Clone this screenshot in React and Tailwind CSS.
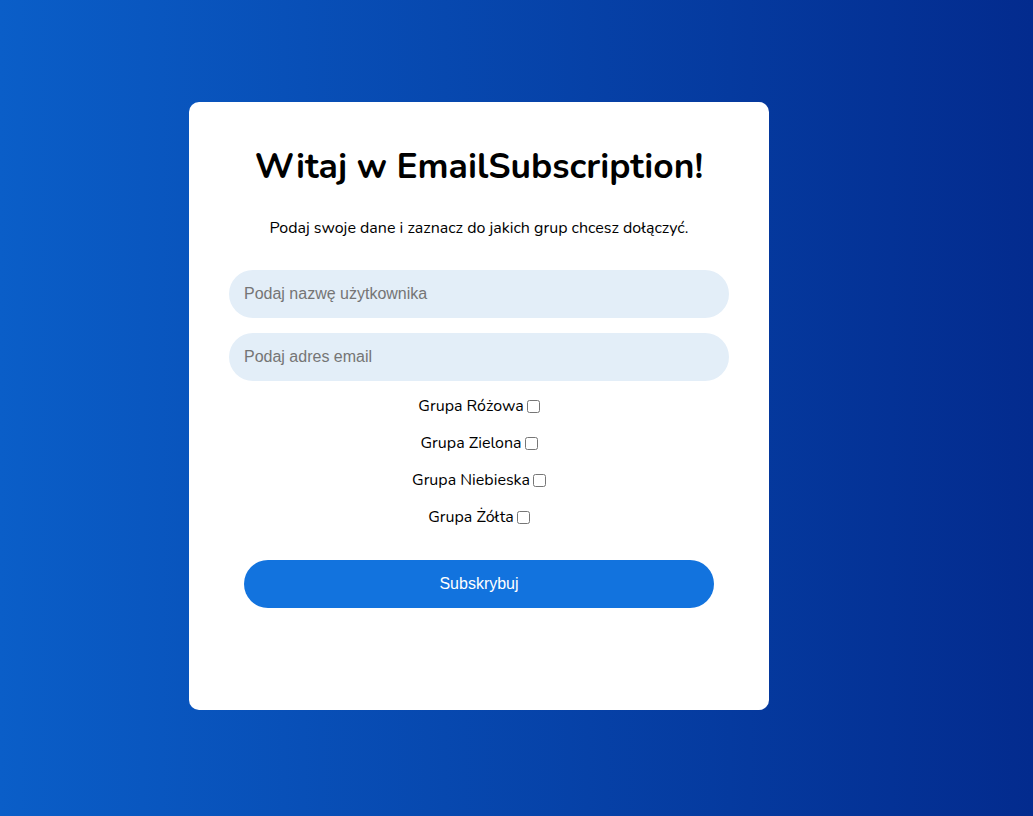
import React from "react";

export default function App() {
  const groups = ["Grupa Różowa", "Grupa Zielona", "Grupa Niebieska", "Grupa Żółta"];
  return (
    <div className="min-h-[816px] w-full bg-[linear-gradient(to_right,#0a5ec8,#032b8e)] pt-[102px] pl-[189px]">
      <div className="w-[580px] h-[608px] bg-white rounded-[10px] px-[40px] pt-[40px] flex flex-col items-center" style={{ fontFamily: "Nunito, 'Noto Sans', sans-serif" }}>
        <h1 className="text-[35.4px] leading-[48px] font-bold text-black text-center">Witaj w EmailSubscription!</h1>
        <p className="mt-[26px] text-[16px] leading-[24px] text-black text-center">Podaj swoje dane i zaznacz do jakich grup chcesz dołączyć.</p>
        <input
          type="text"
          placeholder="Podaj nazwę użytkownika"
          className="mt-[30px] w-[500px] h-[48px] rounded-full bg-[#e3eef8] px-[15px] text-[16px] outline-none placeholder:text-[#757575]"
          style={{ fontFamily: "'Liberation Sans', Arial, sans-serif" }}
        />
        <input
          type="email"
          placeholder="Podaj adres email"
          className="mt-[15px] w-[500px] h-[48px] rounded-full bg-[#e3eef8] px-[15px] text-[16px] outline-none placeholder:text-[#757575]"
          style={{ fontFamily: "'Liberation Sans', Arial, sans-serif" }}
        />
        <div className="mt-[13px] flex flex-col items-center gap-[13px]">
          {groups.map((g) => (
            <label key={g} className="flex items-center h-[24px] text-[16px] text-black">
              <span>{g}</span>
              <input type="checkbox" className="ml-[3px] w-[13px] h-[13px]" />
            </label>
          ))}
        </div>
        <button
          className="mt-[31px] w-[470px] h-[48px] rounded-full bg-[#1273de] text-white text-[16px]"
          style={{ fontFamily: "'Liberation Sans', Arial, sans-serif" }}
        >
          Subskrybuj
        </button>
      </div>
    </div>
  );
}
